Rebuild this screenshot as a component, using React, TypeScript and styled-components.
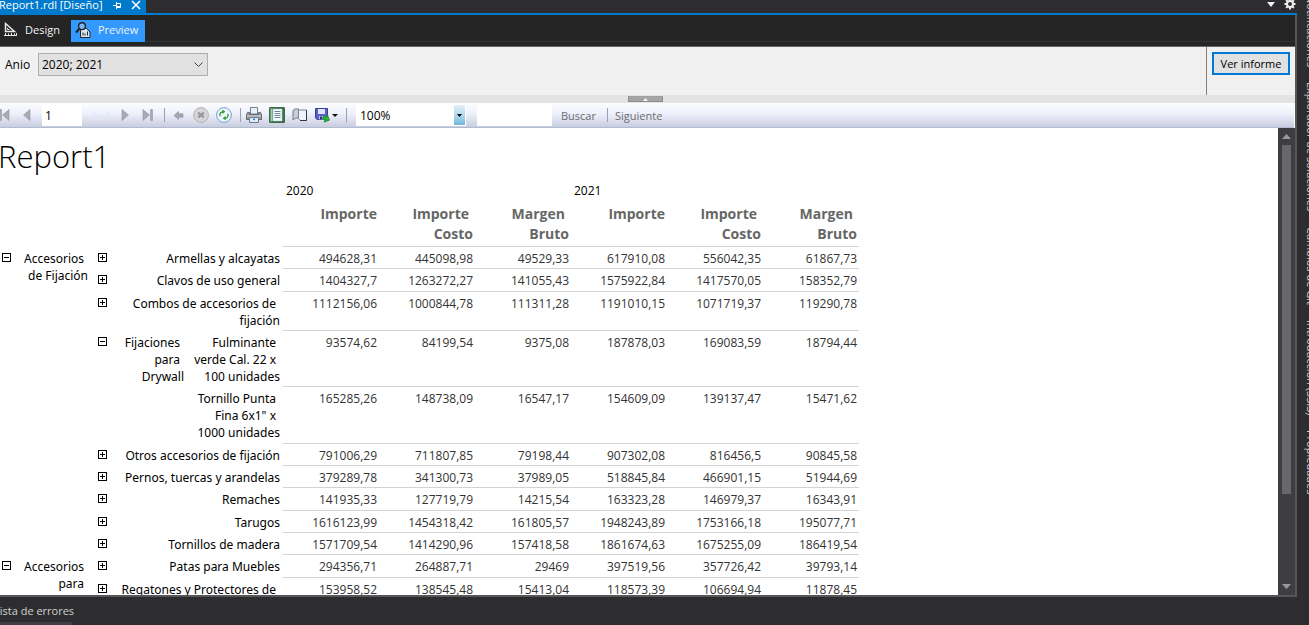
import React, { useState } from 'react';
import styled, { createGlobalStyle, css } from 'styled-components';

const GlobalStyle = createGlobalStyle`
  * { box-sizing: border-box; }
  body { margin: 0; background: #2d2d30; font-family: "Open Sans", "Noto Sans", sans-serif; font-size: 12px; }
  button, input, select { font: inherit; margin: 0; }
`;

const Shell = styled.div`
  display: grid;
  grid-template-columns: minmax(0, 1fr) 12px;
  height: 100vh;
  overflow: hidden;
`;

const Workspace = styled.div`
  display: flex;
  flex-direction: column;
  min-width: 0;
  min-height: 0;
`;

const DocumentTabs = styled.div`
  display: flex;
  justify-content: space-between;
  height: 15px;
  flex: none;
  border-bottom: 2px solid #007acc;
`;

const DocumentTab = styled.div`
  display: flex;
  align-items: center;
  gap: 9px;
  width: 146px;
  height: 13px;
  padding-bottom: 3px;
  background: #007acc;
  color: #fff;
  font-size: 11px;
  line-height: 16px;
  white-space: nowrap;
`;

const TabTitle = styled.span`
  width: 105px;
  margin-left: -1px;
`;

const BareButton = styled.button`
  display: inline-flex;
  align-items: center;
  justify-content: center;
  padding: 0;
  border: 0;
  background: none;
  color: inherit;
  flex: none;
`;

const TabActions = styled.div`
  display: flex;
  gap: 9px;
  align-items: center;
  height: 8px;
  padding-right: 1px;
  color: #f1f1f1;
`;

const DocumentBody = styled.div`
  display: flex;
  flex-direction: column;
  flex: 1;
  min-height: 0;
  border-right: 2px solid #55555a;
  border-bottom: 2px solid #55555a;
  background: #fff;
`;

const ModeBar = styled.div`
  flex: none;
  height: 32px;
  padding-top: 5px;
  background: #252526;
  border-bottom: 1px solid #6a6a6a;
`;

const ModeTabs = styled.div`
  display: flex;
  height: 22px;
  border-bottom: 1px solid #333337;
`;

const ModeTab = styled(BareButton)<{ $active?: boolean }>`
  justify-content: flex-start;
  width: ${p => (p.$active ? 74 : 71)}px;
  height: 22px;
  gap: 7px;
  padding: 0 4px 3px;
  background: ${p => (p.$active ? '#3399ff' : '#252526')};
  color: #f1f1f1;
  font-size: 11px;
`;

const Parameters = styled.form`
  display: flex;
  flex: none;
  height: 48px;
  background: #f0f0f0;
  color: #000;
`;

const ParameterFields = styled.div`
  display: flex;
  align-items: flex-start;
  flex: 1;
  padding: 6px 0 0 5px;
`;

const FieldLabel = styled.label`
  width: 33px;
  line-height: 23px;
`;

const SelectWrap = styled.span<{ $width: number }>`
  display: grid;
  grid-template-columns: minmax(0, 1fr) auto;
  width: ${p => p.$width}px;
  & > select { grid-area: 1 / 1 / 2 / 3; }
  & > span { grid-area: 1 / 2; pointer-events: none; }
`;

const ParameterSelect = styled.select`
  appearance: none;
  height: 23px;
  padding: 0 3px;
  border: 1px solid #adadad;
  border-radius: 0;
  background: #e1e1e1;
  color: #000;
`;

const SelectArrow = styled.span`
  display: flex;
  align-items: center;
  width: 14px;
`;

const RunArea = styled.div`
  width: 89px;
  padding: 5px 0 0 5px;
  border-left: 1px solid #808080;
`;

const RunButton = styled.button`
  width: 78px;
  height: 23px;
  padding: 0;
  border: 2px solid #0078d7;
  background: #e1e1e1;
  color: #000;
  font-size: 11px;
  line-height: 18px;
`;

const Splitter = styled.div`
  display: flex;
  justify-content: center;
  flex: none;
  height: 8px;
  padding-right: 4px;
  background: #e3e3e3;
`;

const SplitterGrip = styled(BareButton)`
  width: 35px;
  height: 6px;
  margin-top: 1px;
  border: 1px solid #8c8c8c;
  border-top-color: #a0a0a0;
  background: #a5a5a5;
`;

const Toolbar = styled.div`
  display: flex;
  align-items: center;
  gap: 7px;
  flex: none;
  height: 25px;
  margin-right: 1px;
  overflow: hidden;
  background: linear-gradient(#fcfdff, #eef0fb 45%, #c8cde0);
  border-bottom: 1px solid #b1bbd2;
  color: #696969;
`;

const ToolButton = styled(BareButton)<{ $wide?: boolean }>`
  width: ${p => (p.$wide ? 23 : 16)}px;
  height: 16px;
  &:first-child { margin-left: -4px; }
`;

const TextButton = styled(BareButton)`
  color: #6d6d6d;
  margin: 0 3px 0 2px;
  font-size: 11px;
`;

const Separator = styled.span`
  flex: none;
  width: 1px;
  height: 14px;
  margin: 0 -2px 0 1px;
  background: #9a9fb5;
`;

const ToolInput = styled.input<{ $width: number }>`
  flex: none;
  width: ${p => p.$width}px;
  height: 22px;
  padding: 0 3px;
  border: 0;
  background: #fff;
  color: #000;
`;

const PageTotal = styled.span`
  flex: none;
  width: 21px;
  color: #e4e8f5;
  font-size: 11px;
  white-space: nowrap;
`;

const ZoomBox = styled(SelectWrap)`
  flex: none;
  margin: 0 4px;
`;

const ZoomSelect = styled.select`
  appearance: none;
  height: 22px;
  padding: 0 4px;
  border: 0;
  border-radius: 0;
  background: #fff;
  color: #000;
`;

const ZoomArrow = styled.span`
  display: flex;
  align-items: center;
  justify-content: center;
  width: 11px;
  height: 20px;
  margin: 1px 1px 1px 0;
  background: linear-gradient(#e2eef6, #b4daee 50%, #6fb7dc);
`;

const Viewer = styled.div`
  display: flex;
  flex: 1;
  min-height: 0;
`;

const Report = styled.main`
  flex: 1;
  min-width: 0;
  overflow: hidden;
  background: #fff;
  color: #000;
`;

const ReportTitle = styled.h1`
  margin: 0 0 0 -2px;
  padding-top: 8px;
  height: 51px;
  font-size: 31px;
  font-weight: 300;
  line-height: 40px;
`;

const Matrix = styled.table`
  table-layout: fixed;
  width: 864px;
  margin-left: -5px;
  border-collapse: separate;
  border-spacing: 0;
  line-height: 17px;
  th, td { vertical-align: top; text-align: right; font-weight: 400; white-space: nowrap; }
`;

const YearHeader = styled.th`
  && { text-align: left; }
  height: 25px;
  padding: 3px;
`;

const MeasureHeader = styled.th`
  && { font-weight: 700; }
  height: 43px;
  padding: 0 2px 2px;
  border-bottom: 1px solid #d3d3d3;
  color: #666;
  font-size: 14px;
  line-height: 20px;
`;

const cellPadding = css`padding: 3px 3px 1px 7px;`;

const GroupCell = styled.th`
  ${cellPadding}
  font-family: "Noto Sans", "Open Sans", sans-serif;
`;

const ValueCell = styled.td<{ $height: number }>`
  height: ${p => p.$height}px;
  padding: 3px 2px 0;
  border-bottom: 1px solid #d3d3d3;
  color: #333;
`;

const GroupContent = styled.div`
  display: flex;
  justify-content: space-between;
  align-items: flex-start;
`;

const Lines = styled.div`flex: 1;`;

const Line = styled.span`
  display: block;
  min-height: 17px;
  &:not(:last-child) { padding-right: 4px; }
`;

const Toggle = styled(BareButton)`
  width: 9px;
  height: 9px;
  margin-top: 3px;
  background: #fff;
  color: #000;
`;

const ScrollTrack = styled.div`
  display: flex;
  flex-direction: column;
  align-items: center;
  flex: none;
  width: 17px;
  padding: 6px 0;
  background: #3e3e42;
`;

const ScrollThumb = styled.div`
  flex: 349 1 0;
  width: 9px;
  margin-top: 6px;
  background: #686868;
`;

const ScrollRest = styled.div`flex: 90 1 0;`;

const Footer = styled.footer`
  flex: none;
  height: 28px;
  padding-top: 5px;
  overflow: hidden;
`;

const FooterTab = styled(BareButton)`
  display: block;
  width: 78px;
  height: 23px;
  margin-left: -6px;
  padding-bottom: 2px;
  border-bottom: 3px solid #3f3f46;
  color: #d0d0d0;
  text-align: left;
  font-size: 11px;
  line-height: 16px;
  white-space: nowrap;
`;

const SideRail = styled.nav`
  display: flex;
  flex-direction: column;
  gap: 15px;
  overflow: hidden;
  padding-left: 6px;
`;

const RailTab = styled(BareButton)`
  display: block;
  width: 16px;
  writing-mode: vertical-rl;
  color: #d0d0d0;
  font-size: 11px;
  line-height: 16px;
  text-align: left;
  white-space: nowrap;
  &:first-child { margin-top: -5px; }
`;

type Row = { height: number; values: string[]; label: string[]; parent?: string[]; detail?: boolean };

const rows: Row[] = [
  { height: 22, label: ['Armellas y alcayatas'], values: ['494628,31', '445098,98', '49529,33', '617910,08', '556042,35', '61867,73'] },
  { height: 23, label: ['Clavos de uso general'], values: ['1404327,7', '1263272,27', '141055,43', '1575922,84', '1417570,05', '158352,79'] },
  { height: 39, label: ['Combos de accesorios de', 'fijación'], values: ['1112156,06', '1000844,78', '111311,28', '1191010,15', '1071719,37', '119290,78'] },
  { height: 56, parent: ['Fijaciones', 'para', 'Drywall'], label: ['Fulminante', 'verde Cal. 22 x', '100 unidades'], values: ['93574,62', '84199,54', '9375,08', '187878,03', '169083,59', '18794,44'] },
  { height: 57, detail: true, label: ['Tornillo Punta', 'Fina 6x1" x', '1000 unidades'], values: ['165285,26', '148738,09', '16547,17', '154609,09', '139137,47', '15471,62'] },
  { height: 22, label: ['Otros accesorios de fijación'], values: ['791006,29', '711807,85', '79198,44', '907302,08', '816456,5', '90845,58'] },
  { height: 22, label: ['Pernos, tuercas y arandelas'], values: ['379289,78', '341300,73', '37989,05', '518845,84', '466901,15', '51944,69'] },
  { height: 23, label: ['Remaches'], values: ['141935,33', '127719,79', '14215,54', '163323,28', '146979,37', '16343,91'] },
  { height: 22, label: ['Tarugos'], values: ['1616123,99', '1454318,42', '161805,57', '1948243,89', '1753166,18', '195077,71'] },
  { height: 22, label: ['Tornillos de madera'], values: ['1571709,54', '1414290,96', '157418,58', '1861674,63', '1675255,09', '186419,54'] },
  { height: 23, label: ['Patas para Muebles'], values: ['294356,71', '264887,71', '29469', '397519,56', '357726,42', '39793,14'] },
  { height: 39, label: ['Regatones y Protectores de', ''], values: ['153958,52', '138545,48', '15413,04', '118573,39', '106694,94', '11878,45'] },
];

const groups: Record<number, { span: number; label: string[] }> = {
  0: { span: 10, label: ['Accesorios', 'de Fijación'] },
  10: { span: 2, label: ['Accesorios', 'para', ''] },
};

const measures = [['Importe'], ['Importe', 'Costo'], ['Margen', 'Bruto']];

function Label({ lines, toggle }: { lines: string[]; toggle?: 'plus' | 'minus' }) {
  return (
    <GroupContent>
      {toggle && (
        <Toggle type="button" aria-label={toggle === 'plus' ? 'Expandir' : 'Contraer'}>
          <svg width="9" height="9" shapeRendering="crispEdges" fill="none" stroke="currentColor">
            <path d={toggle === 'plus' ? 'M.5.5h8v8h-8zM2 4.5h5M4.5 2v5' : 'M.5.5h8v8h-8zM2 4.5h5'} />
          </svg>
        </Toggle>
      )}
      <Lines>{lines.map((line, i) => <Line key={i}>{line}</Line>)}</Lines>
    </GroupContent>
  );
}

const PlayIcon = ({ back, bar }: { back?: boolean; bar?: boolean }) => (
  <svg width="16" height="16" viewBox="0 0 16 16" fill="#a9abb3" stroke="#93959d" strokeWidth=".6">
    <g transform={back ? 'matrix(-1 0 0 1 16 0)' : undefined}>
      {bar ? <><path d="M3 2.5v11L9.5 8z" /><path d="M10.5 2.5h2v11h-2z" /></> : <path d="M5 2.5v11L11.5 8z" />}
    </g>
  </svg>
);

const BackIcon = () => (
  <svg width="16" height="16" viewBox="0 0 16 16"><path d="M4 8.500 8.500 4.500v2.300H13v3.400H8.500v2.300z" fill="#a6a8ae" stroke="#8f9198" strokeWidth=".6" /></svg>
);

const StopIcon = () => (
  <svg width="16" height="16" viewBox="0 0 16 16">
    <circle cx="8" cy="8" r="7.4" fill="#d6d6d8" stroke="#b4b4b6" />
    <path d="m5.2 5.6 5.6 4.800m0-4.800-5.600 4.800" stroke="#98989b" strokeWidth="2.2" />
  </svg>
);

const RefreshIcon = () => (
  <svg width="16" height="16" viewBox="0 0 16 16">
    <circle cx="8" cy="8" r="7.4" fill="#f0f6fd" stroke="#6f9fd6" />
    <path d="M4 9.200V7q.2-2 2.500-2.200" fill="none" stroke="#2a9c2c" strokeWidth="1.300" />
    <path d="M6.300 2.500 9.300 4.700 6.300 7z" fill="#2a9c2c" />
    <path d="M12 6.800V9q-.2 2-2.500 2.200" fill="none" stroke="#2a9c2c" strokeWidth="1.300" />
    <path d="M9.700 9 6.700 11.300l3 2.200z" fill="#2a9c2c" />
  </svg>
);

const PrintIcon = () => (
  <svg width="16" height="16" viewBox="0 0 16 16">
    <path d="M4.500.5h7V7h-7z" fill="#e9f1fb" stroke="#77818f" />
    <path d="M1.500 5.500h2v2h9v-2h2l1 2v5H.5v-5z" fill="#9a9b9f" stroke="#66676b" />
    <path d="M1 9h14" stroke="#d8d9dc" />
    <path d="M3.500 10.500h9v5h-9z" fill="#dcebfb" stroke="#6d7b8d" />
    <path d="M7 11.500h2v1.500H7z" fill="#2e7fd0" />
  </svg>
);

const LayoutIcon = () => (
  <svg width="16" height="16" viewBox="0 0 16 16">
    <path d="M.7.7h14.600v14.600H.7z" fill="#3f7f4c" stroke="#244d2e" />
    <path d="M1.500 1.500h2v13h-2z" fill="#9fceaa" />
    <path d="M4 2h9v12H4z" fill="#f5f9ff" stroke="#a9bccb" strokeWidth=".5" />
    <path d="M5.500 4.500h6m-6 2h6m-6 2h6m-6 2h6" stroke="#6c86a5" />
  </svg>
);

const PageSetupIcon = () => (
  <svg width="16" height="16" viewBox="0 0 16 16">
    <path d="M1 13V3.500L3 2h3.500v9H3.500L1.500 13z" fill="#c9ced6" stroke="#747c88" />
    <path d="M6.500 11V3h8v10.500H8.300L6.500 11.500z" fill="#edf3fc" stroke="#7c8798" />
    <path d="M14.500 3v10.500H8" fill="none" stroke="#303743" />
  </svg>
);

const ExportIcon = () => (
  <svg width="23" height="16" viewBox="0 0 23 16">
    <path d="M.5 1.500h12v11H2L.5 11z" fill="#5a5fc8" stroke="#3a3e9c" />
    <path d="M3 2h7v5H3z" fill="#dfe6fa" />
    <path d="M4 9h6v3.500H4z" fill="#b9bfe8" />
    <path d="M5 9.500h2v3H5z" fill="#2f3488" />
    <path d="M8 10h3V7.500l4 4-4 4V13H8z" transform="rotate(25 11 11)" fill="#29b33a" stroke="#128024" strokeWidth=".7" />
    <path d="M17 7h6l-3 3z" fill="#111" />
  </svg>
);

const Triangle = ({ up, color, width = 9 }: { up?: boolean; color: string; width?: number }) => (
  <svg width={width} height={width > 5 ? 5 : 3} viewBox="0 0 10 5" preserveAspectRatio="none">
    <path d={up ? 'M0 5h10L5 0z' : 'M0 0h10L5 5z'} fill={color} />
  </svg>
);

const sideTabs = ['Notificaciones', 'Explorador de soluciones', 'Cambios de Git', 'Introducción (SSIS)', 'Propiedades'];

export default function App() {
  const [page, setPage] = useState('1');
  return (
    <>
      <GlobalStyle />
      <Shell>
        <Workspace>
          <DocumentTabs>
            <DocumentTab>
              <TabTitle>Report1.rdl [Diseño]</TabTitle>
              <BareButton aria-label="Anclar">
                <svg width="9" height="8" fill="none" stroke="#fff"><path d="M0 4.500h3M3.500 1v7M3.500 2.500h4v4h-4M4 5.500h4" /></svg>
              </BareButton>
              <BareButton aria-label="Cerrar">
                <svg width="10" height="10" fill="none" stroke="#fff" strokeWidth="1.500"><path d="m1 1 8 8M9 1 1 9" /></svg>
              </BareButton>
            </DocumentTab>
            <TabActions>
              <BareButton aria-label="Lista de documentos"><Triangle color="#f1f1f1" width={8} /></BareButton>
              <BareButton aria-label="Opciones">
                <svg width="12" height="12" viewBox="0 0 12 12" fill="none" stroke="#f1f1f1">
                  <circle cx="6" cy="6" r="3" strokeWidth="2" />
                  <path strokeWidth="2" d="M6 .5v2M6 9.500v2M.5 6h2M9.500 6h2M2.100 2.100l1.300 1.300M8.600 8.600l1.300 1.300M2.100 9.900l1.300-1.300M8.600 3.400l1.300-1.300" />
                </svg>
              </BareButton>
            </TabActions>
          </DocumentTabs>

          <DocumentBody>
            <ModeBar>
              <ModeTabs>
                <ModeTab type="button">
                  <svg width="14" height="15" fill="none" stroke="#e8e8e8">
                    <path d="M1.500 1.500v8h9z" strokeWidth="1.500" /><path d="M3.500 6v1.500h2" /><path d="M0 13.500h13M1.500 11v2M4.500 11.500v1.500M7.500 11v2M10.500 11.500v1.500M12.500 11v2" />
                  </svg>
                  Design
                </ModeTab>
                <ModeTab type="button" $active>
                  <svg width="16" height="16" viewBox="0 0 16 16">
                    <path d="M5.500 6.500h6l3.500 3.500v5.500H5.500z" fill="#d8e6f5" stroke="#222" />
                    <path d="M8 13.500v-3m2 3v-2m2.500 2v-4" stroke="#222" />
                    <circle cx="7" cy="4.200" r="3.400" fill="#79b8f5" stroke="#222" strokeWidth="1.400" />
                    <path d="M4.500 6.500 1 10.500" stroke="#222" strokeWidth="2" />
                  </svg>
                  Preview
                </ModeTab>
              </ModeTabs>
            </ModeBar>

            <Parameters onSubmit={e => e.preventDefault()}>
              <ParameterFields>
                <FieldLabel htmlFor="anio">Anio</FieldLabel>
                <SelectWrap $width={170}>
                  <ParameterSelect id="anio"><option>2020; 2021</option></ParameterSelect>
                  <SelectArrow>
                    <svg width="9" height="6" fill="none" stroke="#444"><path d="m.5.5 4 4 4-4" /></svg>
                  </SelectArrow>
                </SelectWrap>
              </ParameterFields>
              <RunArea><RunButton type="submit">Ver informe</RunButton></RunArea>
            </Parameters>

            <Splitter>
              <SplitterGrip aria-label="Ocultar parámetros"><Triangle up color="#f5f5f5" width={5} /></SplitterGrip>
            </Splitter>

            <Toolbar>
              <ToolButton aria-label="Primera página"><PlayIcon back bar /></ToolButton>
              <ToolButton aria-label="Página anterior"><PlayIcon back /></ToolButton>
              <ToolInput $width={40} aria-label="Página actual" value={page} onChange={e => setPage(e.target.value)} />
              <PageTotal>de 1</PageTotal>
              <ToolButton aria-label="Página siguiente"><PlayIcon /></ToolButton>
              <ToolButton aria-label="Última página"><PlayIcon bar /></ToolButton>
              <Separator />
              <ToolButton aria-label="Atrás"><BackIcon /></ToolButton>
              <ToolButton aria-label="Detener"><StopIcon /></ToolButton>
              <ToolButton aria-label="Actualizar"><RefreshIcon /></ToolButton>
              <Separator />
              <ToolButton aria-label="Imprimir"><PrintIcon /></ToolButton>
              <ToolButton aria-label="Diseño de impresión"><LayoutIcon /></ToolButton>
              <ToolButton aria-label="Configurar página"><PageSetupIcon /></ToolButton>
              <ToolButton $wide aria-label="Exportar"><ExportIcon /></ToolButton>
              <Separator />
              <ZoomBox $width={110}>
                <ZoomSelect aria-label="Zoom"><option>100%</option></ZoomSelect>
                <ZoomArrow><Triangle color="#000" width={5} /></ZoomArrow>
              </ZoomBox>
              <ToolInput $width={75} aria-label="Texto a buscar" />
              <TextButton type="button">Buscar</TextButton>
              <Separator />
              <TextButton type="button">Siguiente</TextButton>
            </Toolbar>

            <Viewer>
              <Report>
                <ReportTitle>Report1</ReportTitle>
                <Matrix>
                  <colgroup>
                    {Array.from({ length: 9 }, (_, i) => <col key={i} />)}
                  </colgroup>
                  <thead>
                    <tr>
                      <td colSpan={3} rowSpan={2} />
                      <YearHeader colSpan={3} scope="colgroup">2020</YearHeader>
                      <YearHeader colSpan={3} scope="colgroup">2021</YearHeader>
                    </tr>
                    <tr>
                      {[...measures, ...measures].map((lines, i) => (
                        <MeasureHeader key={i} scope="col">
                          {lines.map(line => <Line key={line}>{line}</Line>)}
                        </MeasureHeader>
                      ))}
                    </tr>
                  </thead>
                  <tbody>
                    {rows.map((row, i) => (
                      <tr key={i}>
                        {groups[i] && (
                          <GroupCell rowSpan={groups[i].span} scope="rowgroup">
                            <Label lines={groups[i].label} toggle="minus" />
                          </GroupCell>
                        )}
                        {row.parent && (
                          <GroupCell rowSpan={2} scope="rowgroup"><Label lines={row.parent} toggle="minus" /></GroupCell>
                        )}
                        <GroupCell colSpan={row.parent || row.detail ? 1 : 2} scope="row">
                          <Label lines={row.label} toggle={row.parent || row.detail ? undefined : 'plus'} />
                        </GroupCell>
                        {row.values.map((value, j) => <ValueCell key={j} $height={row.height}>{value}</ValueCell>)}
                      </tr>
                    ))}
                  </tbody>
                </Matrix>
              </Report>
              <ScrollTrack>
                <Triangle up color="#999" />
                <ScrollThumb />
                <ScrollRest />
                <Triangle color="#999" />
              </ScrollTrack>
            </Viewer>
          </DocumentBody>

          <Footer><FooterTab type="button">Lista de errores</FooterTab></Footer>
        </Workspace>
        <SideRail>
          {sideTabs.map(tab => <RailTab key={tab} type="button">{tab}</RailTab>)}
        </SideRail>
      </Shell>
    </>
  );
}
